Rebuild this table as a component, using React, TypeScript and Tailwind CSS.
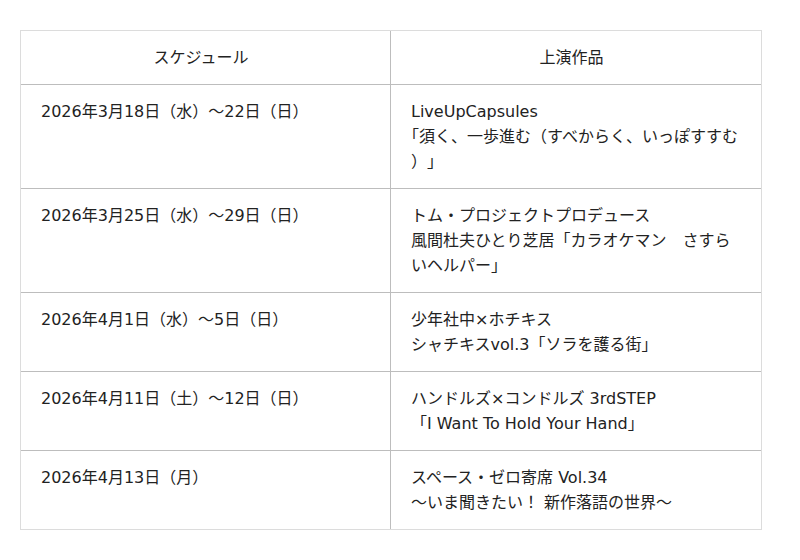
import React from "react";

const rows: { date: string; lines: React.ReactNode[] }[] = [
  {
    date: "2026年3月18日（水）〜22日（日）",
    lines: [
      "LiveUpCapsules",
      <span className="[text-spacing-trim:trim-start]">「須く、一歩進む（すべからく、いっぽすすむ</span>,
      <>
        <span className="inline-block">）</span>
        <span className="inline-block">」</span>
      </>,
    ],
  },
  { date: "2026年3月25日（水）〜29日（日）", lines: ["トム・プロジェクトプロデュース", "風間杜夫ひとり芝居「カラオケマン　さすら", "いヘルパー」"] },
  { date: "2026年4月1日（水）〜5日（日）", lines: ["少年社中×ホチキス", "シャチキスvol.3「ソラを護る街」"] },
  { date: "2026年4月11日（土）〜12日（日）", lines: ["ハンドルズ×コンドルズ 3rdSTEP", "「I Want To Hold Your Hand」"] },
  { date: "2026年4月13日（月）", lines: ["スペース・ゼロ寄席 Vol.34", "〜いま聞きたい！ 新作落語の世界〜"] },
];

export default function App() {
  return (
    <div
      className="w-[800px] h-[560px] bg-white pt-[30px] pl-[20px] text-[16px] leading-[25px] text-[#222]"
      style={{ fontFamily: '"DejaVu Sans", "Noto Sans CJK JP", sans-serif' }}
    >
      <div className="w-[742px] border border-[#dcdcdc]">
        <div className="grid grid-cols-[370px_370px] border-b border-[#bdbdbd]">
          <div className="border-r border-[#bdbdbd] py-[14px] pr-[9px] text-center">スケジュール</div>
          <div className="py-[14px] pr-[9px] text-center">上演作品</div>
        </div>
        {rows.map((r, i) => (
          <div
            key={i}
            className={`grid grid-cols-[370px_370px] ${i < rows.length - 1 ? "border-b border-[#bdbdbd]" : ""}`}
          >
            <div className="border-r border-[#bdbdbd] py-[14px] px-[20px] whitespace-nowrap">{r.date}</div>
            <div className="py-[14px] px-[20px]">
              {r.lines.map((l, j) => (
                <div key={j} className="whitespace-nowrap">{l}</div>
              ))}
            </div>
          </div>
        ))}
      </div>
    </div>
  );
}
